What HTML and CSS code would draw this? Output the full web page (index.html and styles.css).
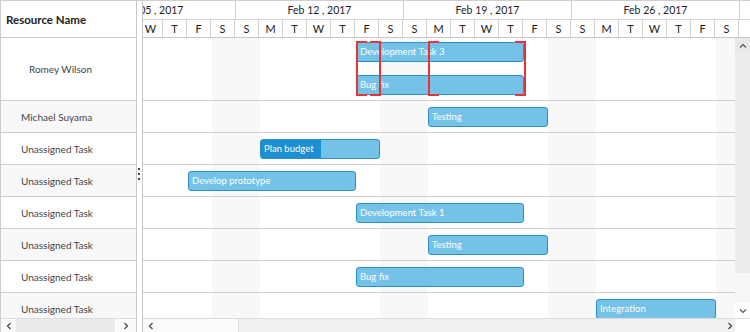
FILE: index.html
```html
<!DOCTYPE html>
<html lang="en">
<head>
    <meta charset="UTF-8">
    <title>Resource Gantt</title>
    <link rel="stylesheet" href="styles.css">
</head>
<body>
    <div class="gantt">
        <!-- GRID (left pane) -->
        <div class="grid-pane">
            <div class="grid-header">Resource Name</div>
            <div class="grid-body">
                <div class="grid-row tall indent">Romey Wilson</div>
                <div class="grid-row alt">Michael Suyama</div>
                <div class="grid-row">Unassigned Task</div>
                <div class="grid-row alt">Unassigned Task</div>
                <div class="grid-row">Unassigned Task</div>
                <div class="grid-row alt">Unassigned Task</div>
                <div class="grid-row">Unassigned Task</div>
                <div class="grid-row alt">Unassigned Task</div>
            </div>
            <div class="hscroll">
                <span class="sb-btn"><svg width="6" height="8" viewBox="0 0 6 8"><path d="M4.5 1 L1.5 4 L4.5 7" fill="none" stroke="#444" stroke-width="1.2"/></svg></span>
                <span class="sb-track dark"></span>
                <span class="sb-btn right"><svg width="6" height="8" viewBox="0 0 6 8"><path d="M1.5 1 L4.5 4 L1.5 7" fill="none" stroke="#444" stroke-width="1.2"/></svg></span>
            </div>
        </div>

        <div class="splitter"><span class="grip"></span></div>

        <!-- CHART (right pane) -->
        <div class="chart-pane">
            <div class="chart-header">
                <div class="weeks">
                    <div class="week">Feb 05 , 2017</div>
                    <div class="week">Feb 12 , 2017</div>
                    <div class="week">Feb 19 , 2017</div>
                    <div class="week">Feb 26 , 2017</div>
                </div>
                <div class="days">
                    <div class="day">W</div><div class="day">T</div><div class="day">F</div><div class="day">S</div>
                    <div class="day">S</div><div class="day">M</div><div class="day">T</div><div class="day">W</div><div class="day">T</div><div class="day">F</div><div class="day">S</div>
                    <div class="day">S</div><div class="day">M</div><div class="day">T</div><div class="day">W</div><div class="day">T</div><div class="day">F</div><div class="day">S</div>
                    <div class="day">S</div><div class="day">M</div><div class="day">T</div><div class="day">W</div><div class="day">T</div><div class="day">F</div><div class="day">S</div>
                </div>
            </div>

            <div class="chart-main">
                <div class="chart-body">
                    <div class="canvas">
                        <div class="chart-row tall">
                            <div class="overlap" style="left: 288px; width: 25px;"></div>
                            <div class="overlap" style="left: 360px; width: 98px;"></div>
                            <div class="bar first" style="left: 288px; width: 168px;">Development Task 3</div>
                            <div class="bar second" style="left: 288px; width: 168px;">Bug fix</div>
                        </div>
                        <div class="chart-row">
                            <div class="bar" style="left: 360px; width: 120px;">Testing</div>
                        </div>
                        <div class="chart-row">
                            <div class="bar" style="left: 192px; width: 120px;">
                                <div class="progress" style="width: 60px;"></div>
                                <span class="bar-label">Plan budget</span>
                            </div>
                        </div>
                        <div class="chart-row">
                            <div class="bar" style="left: 120px; width: 168px;">Develop prototype</div>
                        </div>
                        <div class="chart-row">
                            <div class="bar" style="left: 288px; width: 168px;">Development Task 1</div>
                        </div>
                        <div class="chart-row">
                            <div class="bar" style="left: 360px; width: 120px;">Testing</div>
                        </div>
                        <div class="chart-row">
                            <div class="bar" style="left: 288px; width: 168px;">Bug fix</div>
                        </div>
                        <div class="chart-row">
                            <div class="bar" style="left: 528px; width: 120px;">Integration</div>
                        </div>
                    </div>
                </div>
                <div class="vscroll">
                    <span class="sb-btn up"><svg width="8" height="6" viewBox="0 0 8 6"><path d="M1 4.5 L4 1.5 L7 4.5" fill="none" stroke="#555" stroke-width="1.2"/></svg></span>
                    <span class="sb-thumb"></span>
                    <span class="sb-rest"></span>
                    <span class="sb-btn down"><svg width="8" height="6" viewBox="0 0 8 6"><path d="M1 1.5 L4 4.5 L7 1.5" fill="none" stroke="#555" stroke-width="1.2"/></svg></span>
                </div>
            </div>

            <div class="hscroll">
                <span class="sb-btn"><svg width="6" height="8" viewBox="0 0 6 8"><path d="M4.5 1 L1.5 4 L4.5 7" fill="none" stroke="#444" stroke-width="1.2"/></svg></span>
                <span class="sb-thumb light"></span>
                <span class="sb-track"></span>
                <span class="sb-btn right"><svg width="6" height="8" viewBox="0 0 6 8"><path d="M1.5 1 L4.5 4 L1.5 7" fill="none" stroke="#444" stroke-width="1.2"/></svg></span>
                <span class="sb-corner"></span>
            </div>
        </div>
    </div>
</body>
</html>
```

FILE: styles.css
```css
/* GENERAL */
* {
    box-sizing: border-box;
}

body {
    margin: 0;
    font-family: Lato, "Open Sans", sans-serif;
    background: #fff;
    color: #333;
}

.gantt {
    width: 750px;
    height: 332px;
    border-top: 1px solid #cfcfcf;
    border-left: 1px solid #cfcfcf;
    display: flex;
    overflow: hidden;
}

/* LEFT GRID */
.grid-pane {
    width: 136px;
    flex: none;
    border-right: 1px solid #c8c8c8;
    display: flex;
    flex-direction: column;
}

.grid-header {
    height: 37px;
    flex: none;
    border-bottom: 1px solid #c8c8c8;
    padding-left: 5px;
    display: flex;
    align-items: center;
    font-size: 11.5px;
    font-weight: bold;
    color: #222;
}

.grid-body {
    flex: 1;
    overflow: hidden;
}

.grid-row {
    height: 32px;
    border-bottom: 1px solid #cfcfcf;
    padding-left: 20px;
    display: flex;
    align-items: center;
    font-size: 10px;
    color: #444;
}

.grid-row.alt {
    background: #f8f8f8;
}

.grid-row.tall {
    height: 63px;
}

.grid-row.indent {
    padding-left: 28px;
}

/* SPLITTER */
.splitter {
    width: 5px;
    flex: none;
    position: relative;
    background: #fff;
}

.grip {
    position: absolute;
    left: 1px;
    top: 167px;
    width: 2px;
    height: 12px;
    background: repeating-linear-gradient(180deg, #444 0 2px, transparent 2px 5px);
}

/* RIGHT CHART */
.chart-pane {
    flex: 1;
    min-width: 0;
    border-left: 1px solid #c8c8c8;
    display: flex;
    flex-direction: column;
}

.chart-header {
    height: 37px;
    flex: none;
    border-bottom: 1px solid #c8c8c8;
    overflow: hidden;
}

.weeks,
.days {
    display: flex;
    width: 700px;
}

/* the first week starts 75px before the visible edge */
.weeks {
    margin-left: -75px;
    border-bottom: 1px solid #d0d0d0;
}

/* the first visible day (W) is cut by 4px */
.days {
    margin-left: -4px;
}

.week {
    width: 168px;
    height: 18px;
    flex: none;
    border-right: 1px solid #d0d0d0;
    text-align: center;
    font-size: 10.5px;
    line-height: 18px;
    color: #222;
}

.day {
    width: 24px;
    height: 17px;
    flex: none;
    border-right: 1px solid #d0d0d0;
    text-align: center;
    font-size: 11px;
    line-height: 17px;
    color: #222;
}

.chart-main {
    flex: 1;
    min-height: 0;
    display: flex;
}

.chart-body {
    flex: 1;
    overflow: hidden;
}

.canvas {
    width: 672px;
    margin-left: -75px;
    background: repeating-linear-gradient(90deg, #f8f8f8 0 24px, #fff 24px 144px, #f8f8f8 144px 168px);
}

.chart-row {
    height: 32px;
    border-bottom: 1px solid #cfcfcf;
    position: relative;
}

.chart-row.tall {
    height: 63px;
}

/* TASK BARS */
.bar {
    position: absolute;
    top: 6px;
    height: 20px;
    background: #74c2e7;
    border: 1px solid #2b8fc8;
    border-radius: 3px;
    color: #fff;
    font-size: 9.5px;
    line-height: 18px;
    padding-left: 3px;
    white-space: nowrap;
    overflow: hidden;
    z-index: 2;
}

.bar.first {
    top: 4px;
}

.bar.second {
    top: 37px;
}

.progress {
    position: absolute;
    left: 0;
    top: 0;
    bottom: 0;
    background: #1b8fd2;
}

.bar-label {
    position: relative;
}

.overlap {
    position: absolute;
    top: 3px;
    height: 55px;
    border-left: 2px solid #e8333a;
    border-right: 2px solid #e8333a;
    background:
        linear-gradient(#e8333a, #e8333a) left top / 9px 2px no-repeat,
        linear-gradient(#e8333a, #e8333a) right top / 9px 2px no-repeat,
        linear-gradient(#e8333a, #e8333a) left bottom / 9px 2px no-repeat,
        linear-gradient(#e8333a, #e8333a) right bottom / 9px 2px no-repeat;
    z-index: 3;
    pointer-events: none;
}

/* SCROLLBARS */
.sb-btn svg {
    display: block;
}

.vscroll {
    width: 15px;
    flex: none;
    display: flex;
    flex-direction: column;
    background: #f4f4f4;
}

.vscroll .sb-btn {
    height: 15px;
    flex: none;
    display: flex;
    align-items: center;
    justify-content: center;
    background: #e8e8e8;
}

.vscroll .sb-btn.down {
    background: #fff;
}

.vscroll .sb-thumb {
    height: 220px;
    flex: none;
    background: #ececec;
}

.vscroll .sb-rest {
    flex: 1;
    background: #f6f6f6;
}

.hscroll {
    height: 14px;
    flex: none;
    display: flex;
    border-top: 1px solid #dcdcdc;
    background: #f0f0f0;
}

.hscroll .sb-btn {
    width: 15px;
    flex: none;
    display: flex;
    align-items: center;
    justify-content: center;
    background: #fafafa;
}

.hscroll .sb-btn.right {
    width: 21px;
}

.sb-track {
    flex: 1;
}

.sb-track.dark {
    background: #ebebeb;
}

.hscroll .sb-thumb.light {
    width: 81px;
    flex: none;
    background: #fbfbfb;
    border-right: 1px solid #e0e0e0;
}

.sb-corner {
    width: 15px;
    flex: none;
    background: #fff;
}

.chart-pane .hscroll .sb-btn.right {
    width: 10px;
    background: #f0f0f0;
}
```
